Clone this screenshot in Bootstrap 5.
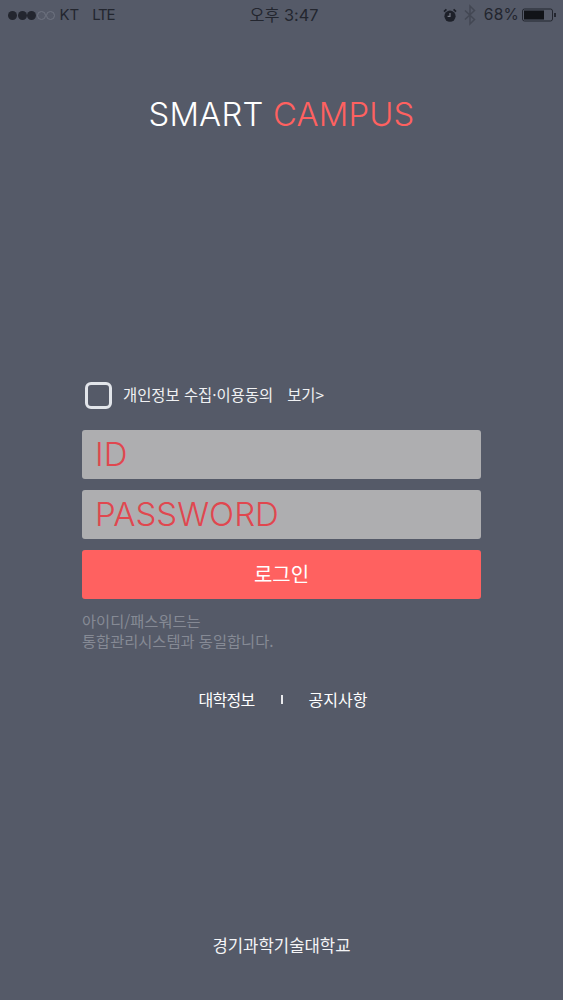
<!DOCTYPE html>
<html lang="ko">
<head>
<meta charset="utf-8">
<title>Smart Campus</title>
<link rel="stylesheet" href="https://cdn.jsdelivr.net/npm/bootstrap@5.3.0/dist/css/bootstrap.min.css">
<style>
html,body{height:100%;}
body{background:#555a68;font-family:"Noto Sans CJK KR","Noto Sans",sans-serif;color:#fff;margin:0;overflow:hidden;}
.phone{width:563px;height:1000px;}
.status-bar{height:30px;padding:0 5px 0 8px;color:#23262f;font-size:15px;line-height:30px;font-family:"Inter","Noto Sans CJK KR",sans-serif;position:relative;}
.status-time{position:absolute;left:5px;right:0;text-align:center;font-size:16.3px;}
.sig{width:9px;height:9px;border-radius:50%;background:#23262f;display:block;margin-right:.5px;}
.sig-off{background:transparent;border:1px solid #6f7481;}
.net-label{margin-left:13px;letter-spacing:-1.2px;}
.bt-mark{opacity:.7;margin:0 8px 0 7px;}
.batt-pct{font-size:15.6px;letter-spacing:.2px;}
.batt-icon{margin-left:3px;}
.logo-title{margin-top:52px;height:64px;line-height:64px;font-family:"Inter","Noto Sans",sans-serif;font-size:32.8px;font-weight:300;text-align:center;letter-spacing:.2px;padding-left:0;}
.logo-accent{color:#ff6160;}
.login-box{margin:233px 0 0 82px;width:399px;}
.agree-row{height:32px;padding-left:3px;font-size:15.4px;color:#f0f1f3;margin-bottom:19px;}
.check-box{width:27px;height:27px;border:3.5px solid #e2e5ea;border-radius:6px;background:#555a68;flex:none;margin-right:11px;}
.gap-view{margin-left:14px;}
.field-box{height:49px;background:#aeaeb0;border-radius:3px;color:#e0474f;font-family:"Inter","Noto Sans",sans-serif;font-size:33px;font-weight:300;line-height:49px;padding-left:13px;margin-bottom:11px;}
.login-btn{display:block;width:100%;height:49px;background:#ff6160;border:0;border-radius:3px;color:#fff;font-size:20px;line-height:1;padding:0 0 2px;}
.login-btn:hover{background:#ff6160;color:#fff;}
.id-note{margin-top:11px;font-size:15.3px;line-height:20px;color:#868a95;}
.link-row{margin-top:37px;font-size:16px;height:24px;color:#fff;padding-left:3px;}
.link-row a{color:#fff;text-decoration:none;}
.link-row a.link-tight{letter-spacing:-.7px;}
.link-sep{width:2px;height:9px;background:#e8e9ec;margin:0 26px 0 26px;}
.school-name{margin-top:222px;text-align:center;font-size:16.7px;color:#f4f4f6;line-height:24px;}
</style>
</head>
<body>
<div class="phone">
  <div class="status-bar d-flex align-items-center">
    <span class="d-flex align-items-center">
      <i class="sig"></i><i class="sig"></i><i class="sig"></i><i class="sig sig-off"></i><i class="sig sig-off"></i>
    </span>
    <span class="ms-1">KT</span>
    <span class="net-label">LTE</span>
    <span class="status-time">오후 3:47</span>
    <span class="ms-auto d-flex align-items-center">
      <svg width="14" height="15" viewBox="0 0 14 15"><circle cx="7" cy="8.2" r="5.6" fill="#1d2029"/><path d="M1 3.6 3.4 1.4M13 3.6 10.6 1.4" stroke="#1d2029" stroke-width="1.8"/><path d="M7 5v3.4H4.6" stroke="#777b87" stroke-width="1.1" fill="none"/></svg>
      <svg width="12" height="22" viewBox="0 0 12 22" class="bt-mark"><path d="M1 6.5 10.5 15.5 6 20V2l4.5 4.5L1 15.5" stroke="#3c404b" stroke-width="1.5" fill="none"/></svg>
      <span class="batt-pct">68%</span>
      <svg width="36" height="14" viewBox="0 0 36 14" class="batt-icon"><rect x=".5" y="1" width="30" height="12" rx="2" fill="none" stroke="#23262f"/><rect x="2" y="2.5" width="20" height="9" fill="#111318"/><rect x="32" y="5" width="2" height="4" fill="#23262f"/></svg>
    </span>
  </div>

  <div class="logo-title">SMART <span class="logo-accent">CAMPUS</span></div>

  <div class="login-box">
    <div class="agree-row d-flex align-items-center">
      <span class="check-box"></span>
      <span>개인정보 수집·이용동의</span>
      <span class="gap-view">보기&gt;</span>
    </div>
    <div class="field-box">ID</div>
    <div class="field-box">PASSWORD</div>
    <button type="button" class="btn login-btn">로그인</button>
    <div class="id-note">아이디/패스워드는<br>통합관리시스템과 동일합니다.</div>
    <div class="link-row d-flex align-items-center justify-content-center">
      <a href="#" class="link-tight">대학정보</a>
      <span class="link-sep"></span>
      <a href="#">공지사항</a>
    </div>
  </div>

  <div class="school-name">경기과학기술대학교</div>
</div>
<script src="https://cdn.jsdelivr.net/npm/bootstrap@5.3.0/dist/js/bootstrap.bundle.min.js"></script>
</body>
</html>
